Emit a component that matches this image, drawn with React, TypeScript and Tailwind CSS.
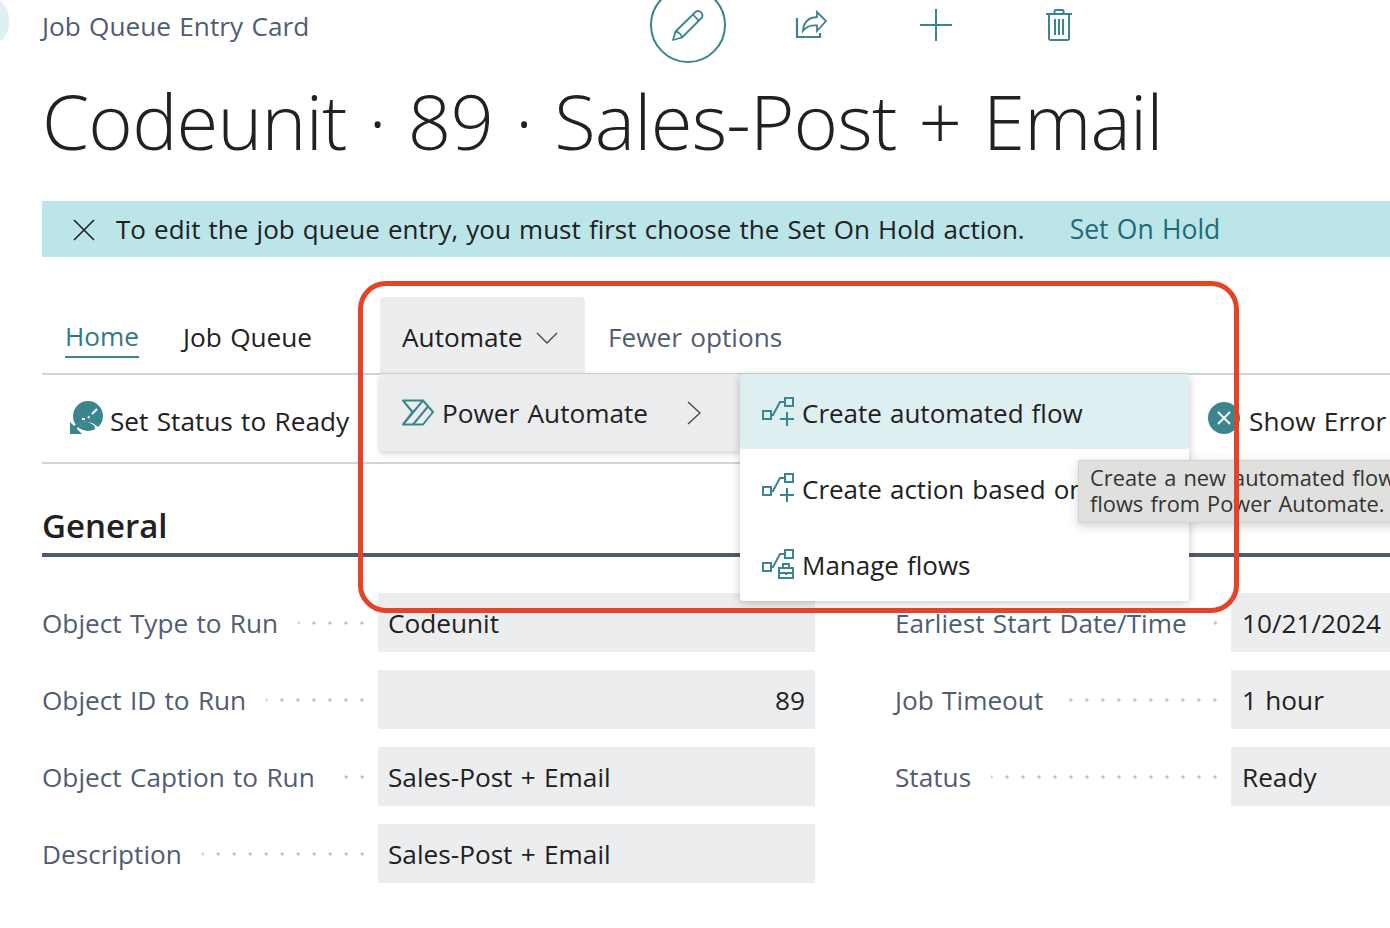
import React from 'react'

const teal = '#3a858e'

const FlowIcon: React.FC<{ manage?: boolean }> = ({ manage }) => (
  <svg width="32" height="31" viewBox="0 0 32 31" fill="none" stroke={teal} strokeWidth="2" className="shrink-0">
    <rect x="1" y="15" width="8" height="8" />
    <path d="M9 19h2L18 6h5" />
    <rect x="23" y="2" width="8" height="8" />
    {manage ? (
      <>
        <rect x="17" y="20" width="14" height="10" />
        <path d="M17 25h14M21 20v-4h6v4M24 24v3" />
      </>
    ) : (
      <path d="M18 23h14M25 16v14" />
    )}
  </svg>
)

const PencilIcon = () => (
  <svg width="32" height="32" viewBox="0 0 32 32" fill="none" stroke={teal} strokeWidth="1.8" strokeLinejoin="round">
    <path d="M1 31l2.500-8.500L24 2.500a4.500 4.500 0 0 1 6 6L10 28.500z" />
    <path d="M3.500 22.500c3 .5 6 3 6.500 6M21 5.500l5.500 6" />
  </svg>
)

const ShareIcon = () => (
  <svg width="33" height="30" viewBox="0 0 33 30" fill="none" stroke={teal} strokeWidth="2">
    <path d="M2 8v19h23v-4" strokeWidth="2.200" />
    <path d="M8 21c.5-9 6-13.500 14-14V2l9 9-9 10v-5.500C15 15 11 17 8 21z" strokeWidth="1.800" />
  </svg>
)

const PlusIcon = () => (
  <svg width="32" height="32" viewBox="0 0 32 32" fill="none" stroke={teal} strokeWidth="2">
    <path d="M0 16h32M16 0v32" />
  </svg>
)

const TrashIcon = () => (
  <svg width="26" height="32" viewBox="0 0 26 32" fill="none" stroke={teal} strokeWidth="2">
    <path d="M0 5h26M8.500 5V2a1 1 0 0 1 1-1h7a1 1 0 0 1 1 1v3M3 5v24.500A1.500 1.500 0 0 0 4.500 31h17a1.500 1.500 0 0 0 1.500-1.500V5M9 10v16M13 10v16M17 10v16" />
  </svg>
)

const PowerAutomateIcon = () => (
  <svg width="32" height="27" viewBox="0 0 32 27" fill="none" stroke={teal} strokeWidth="2" strokeLinejoin="round" className="shrink-0">
    <path d="M1 1.500h20L31 13 21 25.500H1L10.500 13z" />
    <path d="M21 1.500L1 25.500M26 7.500L11 25.500" />
  </svg>
)

const SetReadyIcon = () => (
  <svg width="35" height="35" viewBox="0 0 35 35" fill="none" className="-mt-[7px] shrink-0">
    <circle cx="19" cy="16" r="15" fill={teal} />
    <path d="M13 19h3M19 18l1.500-1.500M23 14l5-5" stroke="#fff" strokeWidth="2" />
    <path d="M3 33c3-10 16-14 26-4" stroke="#fff" strokeWidth="3" />
    <path d="M5 29c5-7 13-8 20-1" stroke={teal} strokeWidth="3.500" />
    <path d="M1 22v12h12z" fill={teal} />
  </svg>
)

const rows = [
  {
    left: ['Object Type to Run', 'Codeunit'],
    right: ['Earliest Start Date/Time', '10/21/2024'],
  },
  { left: ['Object ID to Run', '89'], right: ['Job Timeout', '1 hour'], alignEnd: true },
  { left: ['Object Caption to Run', 'Sales-Post + Email'], right: ['Status', 'Ready'] },
  { left: ['Description', 'Sales-Post + Email'] },
]

const Label: React.FC<{ text: string }> = ({ text }) => (
  <div className="flex w-[323px] shrink-0 items-center gap-5 pt-[2px] text-[#505c72]">
    <span className="whitespace-nowrap">{text}</span>
    <span className="-mr-[5px] h-1 min-w-0 flex-1 bg-[radial-gradient(circle,#c2c3c7_1.5px,transparent_1.7px)] bg-[length:16px_4px] bg-right" />
  </div>
)

export default function App() {
  return (
    <div className="relative h-[928px] w-[1390px] overflow-hidden bg-white pl-[42px] font-['Open_Sans',sans-serif] text-[26.2px] text-[#212121] [word-spacing:1.5px]">
      <div className="absolute -left-9 -top-1 h-[50px] w-[45px] rounded-full bg-[#dff0f3]" />

      {/* top bar */}
      <div className="flex h-[54px] items-center">
        <span className="w-[608px] text-[#505c72]">Job Queue Entry Card</span>
        <div className="-mt-[4px] flex items-center">
          <div className="flex h-[76px] w-[76px] shrink-0 items-center justify-center rounded-full border-2 border-[#3a858e]">
            <PencilIcon />
          </div>
          <div className="ml-[69px]"><ShareIcon /></div>
          <div className="ml-[92px]"><PlusIcon /></div>
          <div className="ml-[94px]"><TrashIcon /></div>
        </div>
      </div>

      <h1 className="mt-[12px] h-[110px] whitespace-nowrap text-[76px] font-light leading-[110px] tracking-[-0.8px] text-[#212121] [word-spacing:3px]">
        Codeunit · 89 · Sales-Post + Email
      </h1>

      <div className="mt-[25px] flex h-[56px] items-center whitespace-nowrap bg-[#bbe5e8] pt-[1px] text-[26px] [word-spacing:1.4px]">
        <svg width="22" height="22" viewBox="0 0 22 22" fill="none" stroke="#212121" strokeWidth="1.6" className="ml-[31px] shrink-0">
          <path d="M1 1l20 20M21 1L1 21" />
        </svg>
        <span className="ml-[21px]">To edit the job queue entry, you must first choose the Set On Hold action.</span>
        <span className="ml-[45px] text-[26.5px] text-[#1f6b75]">Set On Hold</span>
      </div>

      {/* tabs */}
      <div className="mt-[40px] flex h-[78px] items-center border-b-2 border-[#d2d3d7]">
        <span className="ml-[23px] mt-[5px] border-b-2 border-[#3a858e] text-[#2f7a84]">Home</span>
        <span className="ml-[44px] mt-[5px]">Job Queue</span>
        <div className="ml-[68px] flex h-[76px] w-[205px] shrink-0 items-center rounded-t bg-[#ecedef] pl-[22px] pt-[5px]">
          Automate
          <svg width="22" height="12" viewBox="0 0 22 12" fill="none" stroke="#444" strokeWidth="1.300" className="ml-[13px]">
            <path d="M1 1l10 10L21 1" />
          </svg>
        </div>
        <span className="ml-[23px] mt-[5px] text-[#505c72]">Fewer options</span>
      </div>

      {/* action row */}
      <div className="flex h-[89px] items-center border-b-2 border-[#d2d3d7] pt-[6px]">
        <div className="ml-[27px] flex items-center gap-[6px] whitespace-nowrap">
          <SetReadyIcon />
          Set Status to Ready
        </div>
        <div className="ml-[859px] flex shrink-0 items-center gap-[9px] whitespace-nowrap">
          <span className="-mt-[6px] flex h-8 w-8 items-center justify-center rounded-full bg-[#3a858e]">
            <svg width="14" height="14" viewBox="0 0 14 14" fill="none" stroke="#fff" strokeWidth="2">
              <path d="M1 1l12 12M13 1L1 13" />
            </svg>
          </span>
          Show Error
        </div>
      </div>

      <h2 className="mt-[37px] text-[33px] font-semibold leading-[50px]">General</h2>
      <div className="mt-[2px] h-1 bg-[#505a6e]" />

      {/* fields */}
      <div className="mt-[36px] flex flex-col gap-[18px]">
        {rows.map((row) => (
          <div key={row.left[0]} className="flex h-[59px] items-center">
            <Label text={row.left[0]} />
            <div className={`ml-[13px] flex h-full w-[437px] shrink-0 items-center bg-[#ecedef] px-[10px] pt-[2px] ${row.alignEnd ? 'justify-end' : ''}`}>
              {row.left[1]}
            </div>
            {row.right && (
              <>
                <div className="ml-[80px]"><Label text={row.right[0]} /></div>
                <div className="ml-[13px] flex h-full w-[159px] shrink-0 items-center overflow-hidden whitespace-nowrap bg-[#ecedef] pl-[11px] pt-[2px]">
                  {row.right[1]}
                </div>
              </>
            )}
          </div>
        ))}
      </div>

      {/* Automate menu */}
      <div className="absolute left-[380px] top-[374px] flex h-[77px] w-[360px] items-center bg-[#ebecee] pl-[22px] shadow-[0_2px_6px_rgba(0,0,0,0.2)]">
        <PowerAutomateIcon />
        <span className="ml-[8px] pt-[2px]">Power Automate</span>
        <svg width="14" height="24" viewBox="0 0 14 24" fill="none" stroke="#444" strokeWidth="1.300" className="ml-[39px] shrink-0">
          <path d="M1 1l12 11L1 23" />
        </svg>
      </div>

      {/* flows submenu */}
      <div className="absolute left-[740px] top-[374px] h-[227px] w-[449px] rounded-sm bg-white text-[26px] shadow-[0_2px_10px_rgba(0,0,0,0.22)] [word-spacing:1.3px]">
        <div className="flex h-[75px] items-center gap-2 rounded-sm bg-[#deeff2] pl-[22px]">
          <FlowIcon />
          <span className="pt-[3px]">Create automated flow</span>
        </div>
        <div className="flex h-[76px] items-center gap-2 whitespace-nowrap pl-[22px]">
          <FlowIcon />
          <span className="pt-[5px]">Create action based on</span>
        </div>
        <div className="flex h-[76px] items-center gap-2 pl-[22px]">
          <FlowIcon manage />
          <span className="pt-[5px]">Manage flows</span>
        </div>
      </div>

      {/* tooltip */}
      <div className="absolute left-[1078px] top-[460px] h-[63px] w-[340px] whitespace-nowrap border border-[#d3d3d1] bg-[#e0e0de] px-[11px] py-[4px] text-[21.8px] leading-[26px] text-[#333] shadow-[0_3px_10px_rgba(0,0,0,0.18)]">
        <div>Create a new automated flow</div>
        <div>flows from Power Automate.</div>
      </div>

      {/* annotation frame */}
      <div className="pointer-events-none absolute left-[358px] top-[281px] h-[332px] w-[881px] rounded-[28px] border-[5px] border-[#e8412a]" />
    </div>
  )
}
